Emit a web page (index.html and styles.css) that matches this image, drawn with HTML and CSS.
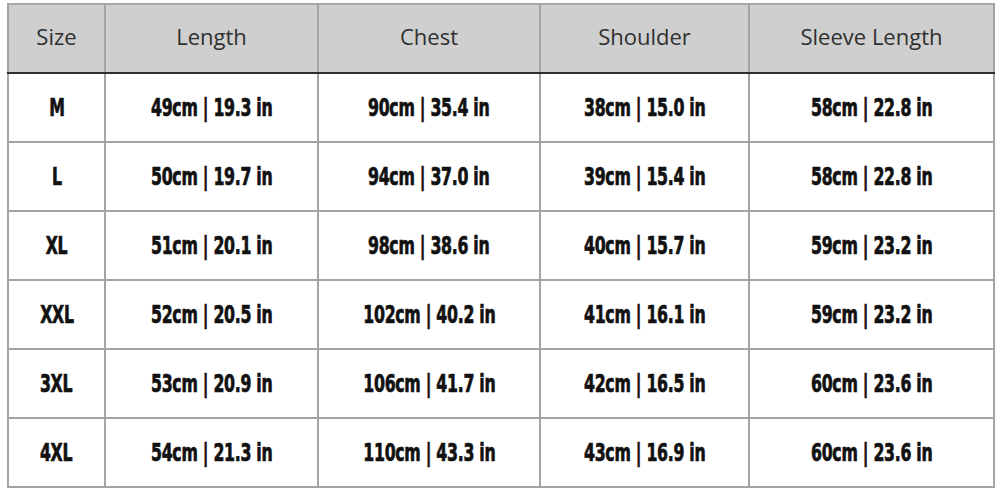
FILE: index.html
```html
<!DOCTYPE html>
<html>
<head>
<meta charset="utf-8">
<link rel="stylesheet" href="styles.css">
</head>
<body>
<table class="size-table">
  <colgroup>
    <col class="c1"><col class="c2"><col class="c3"><col class="c4"><col class="c5">
  </colgroup>
  <thead>
    <tr><th>Size</th><th>Length</th><th>Chest</th><th>Shoulder</th><th>Sleeve Length</th></tr>
  </thead>
  <tbody>
    <tr><td><span class="v">M</span></td><td><span class="v">49cm | 19.3 in</span></td><td><span class="v">90cm | 35.4 in</span></td><td><span class="v">38cm | 15.0 in</span></td><td><span class="v">58cm | 22.8 in</span></td></tr>
    <tr><td><span class="v">L</span></td><td><span class="v">50cm | 19.7 in</span></td><td><span class="v">94cm | 37.0 in</span></td><td><span class="v">39cm | 15.4 in</span></td><td><span class="v">58cm | 22.8 in</span></td></tr>
    <tr><td><span class="v">XL</span></td><td><span class="v">51cm | 20.1 in</span></td><td><span class="v">98cm | 38.6 in</span></td><td><span class="v">40cm | 15.7 in</span></td><td><span class="v">59cm | 23.2 in</span></td></tr>
    <tr><td><span class="v">XXL</span></td><td><span class="v">52cm | 20.5 in</span></td><td><span class="v">102cm | 40.2 in</span></td><td><span class="v">41cm | 16.1 in</span></td><td><span class="v">59cm | 23.2 in</span></td></tr>
    <tr><td><span class="v">3XL</span></td><td><span class="v">53cm | 20.9 in</span></td><td><span class="v">106cm | 41.7 in</span></td><td><span class="v">42cm | 16.5 in</span></td><td><span class="v">60cm | 23.6 in</span></td></tr>
    <tr><td><span class="v">4XL</span></td><td><span class="v">54cm | 21.3 in</span></td><td><span class="v">110cm | 43.3 in</span></td><td><span class="v">43cm | 16.9 in</span></td><td><span class="v">60cm | 23.6 in</span></td></tr>
  </tbody>
</table>
</body>
</html>
```
FILE: styles.css
```css
html, body {
  margin: 0;
  padding: 0;
  background: #ffffff;
}
body {
  padding: 3px 0 0 7px;
}
.size-table {
  border-collapse: collapse;
  table-layout: fixed;
  width: 986px;
  border: 2px solid #a8a8a8;
}
.c1 { width: 97px; }
.c2 { width: 213px; }
.c3 { width: 222px; }
.c4 { width: 209px; }
.c5 { width: 245px; }
.size-table th {
  height: 62px;
  padding: 0 0 5px 0;
  background: #cfcfcf;
  border-left: 2px solid #a4a4a4;
  border-right: 2px solid #a4a4a4;
  border-bottom: 2px solid #2e2e2e;
  font-family: "Open Sans", "Noto Sans", sans-serif;
  font-weight: 400;
  font-size: 22px;
  color: #2f2f2f;
  text-align: center;
  vertical-align: middle;
}
.size-table td {
  height: 67px;
  padding: 0;
  border: 2px solid #a4a4a4;
  text-align: center;
  vertical-align: middle;
}
.v {
  display: inline-block;
  font-family: "DejaVu Sans Condensed", "DejaVu Sans", sans-serif;
  font-weight: bold;
  font-size: 25px;
  color: #111111;
  transform: scaleX(0.7);
  white-space: nowrap;
  letter-spacing: -0.4px;
  -webkit-text-stroke: 0.7px #111111;
}
```
